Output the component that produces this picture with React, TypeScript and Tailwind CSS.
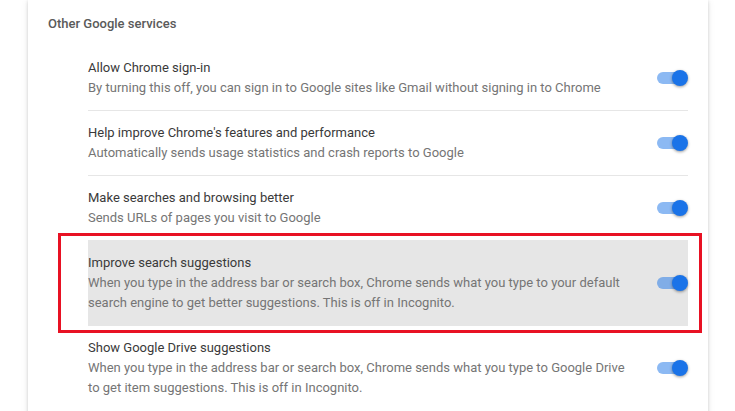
import React from "react";

type Row = { title: string; lines: string[]; highlight?: boolean };

const rows: Row[] = [
  {
    title: "Allow Chrome sign-in",
    lines: ["By turning this off, you can sign in to Google sites like Gmail without signing in to Chrome"],
  },
  {
    title: "Help improve Chrome's features and performance",
    lines: ["Automatically sends usage statistics and crash reports to Google"],
  },
  {
    title: "Make searches and browsing better",
    lines: ["Sends URLs of pages you visit to Google"],
  },
  {
    title: "Improve search suggestions",
    lines: [
      "When you type in the address bar or search box, Chrome sends what you type to your default",
      "search engine to get better suggestions. This is off in Incognito.",
    ],
    highlight: true,
  },
  {
    title: "Show Google Drive suggestions",
    lines: [
      "When you type in the address bar or search box, Chrome sends what you type to Google Drive",
      "to get item suggestions. This is off in Incognito.",
    ],
  },
];

function Toggle() {
  return (
    <div className="relative w-[31px] h-[16px] shrink-0">
      <div className="absolute left-0 right-[3px] top-[2px] h-[12px] rounded-full bg-[#1a73e8]/50" />
      <div className="absolute right-0 top-0 w-[16px] h-[16px] rounded-full bg-[#1a73e8] shadow-[0_1px_3px_rgba(0,0,0,0.4)]" />
    </div>
  );
}

export default function App() {
  return (
    <div
      className="w-[735px] h-[411px] overflow-hidden bg-white"
      style={{ fontFamily: "Roboto, 'Liberation Sans', sans-serif" }}
    >
      <div className="ml-[28px] w-[680px] h-[430px] bg-white shadow-[0_1px_3px_rgba(0,0,0,0.16),0_1px_8px_rgba(0,0,0,0.08)] px-[20px]">
        <div className="pt-[14px] pb-[12px] text-[13px] leading-[20px] font-medium text-[#5a5a5a]">
          Other Google services
        </div>
        <div className="ml-[40px]">
          {rows.map((r, i) => (
            <div
              key={i}
              className={
                "relative flex items-center py-[12px] " +
                (i > 0 ? "border-t border-[#e6e6e6] " : "") +
                (r.highlight ? "bg-[#e6e6e6] border-[#dadada]" : "")
              }
            >
              {r.highlight && (
                <div className="absolute left-[-30px] right-[-14px] top-[-8px] bottom-[-8px] border-[3px] border-[#e81123] pointer-events-none" />
              )}
              <div className="flex-1 text-[13px] leading-[20px]">
                <div className="text-[#3a3a3a]">{r.title}</div>
                {r.lines.map((l, j) => (
                  <div key={j} className="text-[#757575] whitespace-nowrap">
                    {l}
                  </div>
                ))}
              </div>
              <Toggle />
            </div>
          ))}
        </div>
      </div>
    </div>
  );
}
